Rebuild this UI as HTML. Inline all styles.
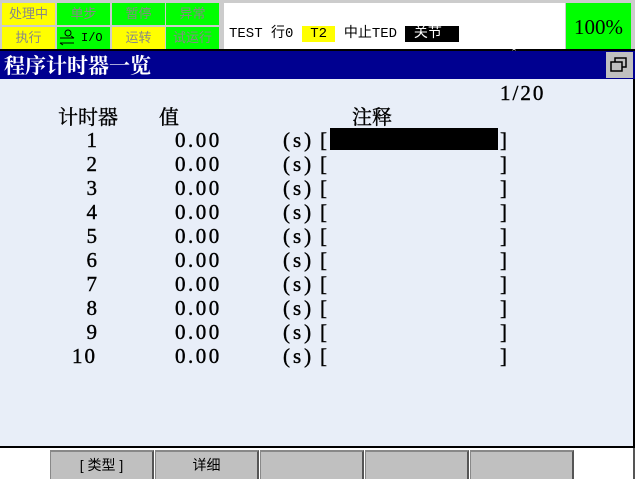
<!DOCTYPE html><html><head><meta charset="utf-8"><style>
body{margin:0;width:635px;height:479px;overflow:hidden;background:#fff;position:relative;font-family:"Liberation Serif","Noto Serif CJK SC",serif}
div{position:absolute;box-sizing:border-box}
.c{font-family:"Liberation Sans","WenQuanYi Zen Hei",sans-serif;font-size:13px;text-align:center;line-height:22px;color:#888;height:22px;width:53px}
.y{background:#ff0}.g{background:#0f0}
.t{font-size:21px;color:#000;line-height:24px;height:24px;white-space:pre;-webkit-text-stroke:0.4px #000}
.r{left:0;width:635px;height:24px;font-size:21px;line-height:24px;-webkit-text-stroke:0.4px #000}
.r span{position:absolute}
.n{right:538px;text-align:right}
.v{left:175px;letter-spacing:2.5px}
.s{left:283px;letter-spacing:3px}
.b1{left:320px}.b2{left:500px}
.btn{top:450px;height:29px;width:104px;background:#c0c0c0;border-top:2px solid #888;border-left:1px solid #888;border-right:2px solid #555;font-family:"Liberation Sans","WenQuanYi Zen Hei",sans-serif;font-size:14px;text-align:center;line-height:27px}
</style></head><body>
<div style="left:0;top:0;width:222px;height:49px;background:#ccc"></div>
<div class="c y" style="left:2px;top:3px">处理中</div>
<div class="c g" style="left:57px;top:3px">单步</div>
<div class="c g" style="left:112px;top:3px">暂停</div>
<div class="c g" style="left:166px;top:3px">异常</div>
<div class="c y" style="left:2px;top:27px">执行</div>
<div class="c g" style="left:57px;top:27px;color:#000;font-family:'Liberation Mono',monospace;font-size:12px;text-align:left;padding-left:24px">I/O</div>
<svg style="position:absolute;left:58px;top:28px" width="18" height="18"><circle cx="10" cy="5" r="3" fill="none" stroke="#000"/><path d="M2 10h14M13 8l3 2M2 15h14M2 15l3 2" stroke="#000" fill="none"/></svg>
<div class="c y" style="left:112px;top:27px">运转</div>
<div class="c g" style="left:166px;top:27px">试运行</div>
<div style="left:222px;top:0;width:413px;height:49px;background:#ccc"></div>
<div style="left:224px;top:3px;width:341px;height:46px;background:#fff"></div>
<div style="left:229px;top:25px;font-family:'Liberation Mono','WenQuanYi Zen Hei',monospace;font-size:14px;line-height:18px;white-space:pre">TEST 行0 <span style="background:#ff0"> T2 </span> 中止TED <span style="background:#000;color:#fff"> 关节  </span></div>
<div style="left:566px;top:3px;width:65px;height:46px;background:#0f0;font-size:21px;text-align:center;line-height:48px">100%</div>
<div style="left:0;top:49px;width:635px;height:2px;background:#000"></div>
<div style="left:0;top:51px;width:635px;height:28px;background:#000090;color:#fff;font-family:'Liberation Serif','Noto Serif CJK SC',serif;font-size:21px;line-height:30px;padding-left:4px;font-weight:bold">程序计时器一览</div>
<div style="left:512px;top:46px;color:#fff;font-size:12px">ˆ</div>
<div style="left:606px;top:52px;width:27px;height:26px;background:#c0c0c0"></div>
<svg style="position:absolute;left:609px;top:55px" width="20" height="20"><rect x="6" y="3" width="11" height="9" fill="none" stroke="#000" stroke-width="1.5"/><rect x="2" y="7" width="11" height="9" fill="#c0c0c0" stroke="#000" stroke-width="1.5"/></svg>
<div style="left:0;top:79px;width:635px;height:367px;background:#e8eef8;border-right:2px solid #000"></div>
<div style="left:0;top:446px;width:635px;height:2px;background:#000"></div>
<div style="left:633px;top:448px;width:2px;height:31px;background:#555"></div>
<div class="t" style="left:500px;top:81px;letter-spacing:2px">1/20</div>
<div class="t" style="left:58px;top:104px;font-family:'Noto Serif CJK SC',serif;font-size:20px">计时器</div>
<div class="t" style="left:159px;top:104px;font-family:'Noto Serif CJK SC',serif;font-size:20px">值</div>
<div class="t" style="left:352px;top:104px;font-family:'Noto Serif CJK SC',serif;font-size:20px">注释</div>
<div style="left:330px;top:128px;width:168px;height:22px;background:#000"></div>
<div class="r" style="top:128px"><span class="n">1</span><span class="v">0.00</span><span class="s">(s)</span><span class="b1">[</span><span class="b2">]</span></div>
<div class="r" style="top:152px"><span class="n">2</span><span class="v">0.00</span><span class="s">(s)</span><span class="b1">[</span><span class="b2">]</span></div>
<div class="r" style="top:176px"><span class="n">3</span><span class="v">0.00</span><span class="s">(s)</span><span class="b1">[</span><span class="b2">]</span></div>
<div class="r" style="top:200px"><span class="n">4</span><span class="v">0.00</span><span class="s">(s)</span><span class="b1">[</span><span class="b2">]</span></div>
<div class="r" style="top:224px"><span class="n">5</span><span class="v">0.00</span><span class="s">(s)</span><span class="b1">[</span><span class="b2">]</span></div>
<div class="r" style="top:248px"><span class="n">6</span><span class="v">0.00</span><span class="s">(s)</span><span class="b1">[</span><span class="b2">]</span></div>
<div class="r" style="top:272px"><span class="n">7</span><span class="v">0.00</span><span class="s">(s)</span><span class="b1">[</span><span class="b2">]</span></div>
<div class="r" style="top:296px"><span class="n">8</span><span class="v">0.00</span><span class="s">(s)</span><span class="b1">[</span><span class="b2">]</span></div>
<div class="r" style="top:320px"><span class="n">9</span><span class="v">0.00</span><span class="s">(s)</span><span class="b1">[</span><span class="b2">]</span></div>
<div class="r" style="top:344px"><span class="n" style="letter-spacing:2px">10</span><span class="v">0.00</span><span class="s">(s)</span><span class="b1">[</span><span class="b2">]</span></div>
<div class="btn" style="left:50px">[ 类型 ]</div>
<div class="btn" style="left:155px">详细</div>
<div class="btn" style="left:260px"></div>
<div class="btn" style="left:365px"></div>
<div class="btn" style="left:470px"></div>
</body></html>
